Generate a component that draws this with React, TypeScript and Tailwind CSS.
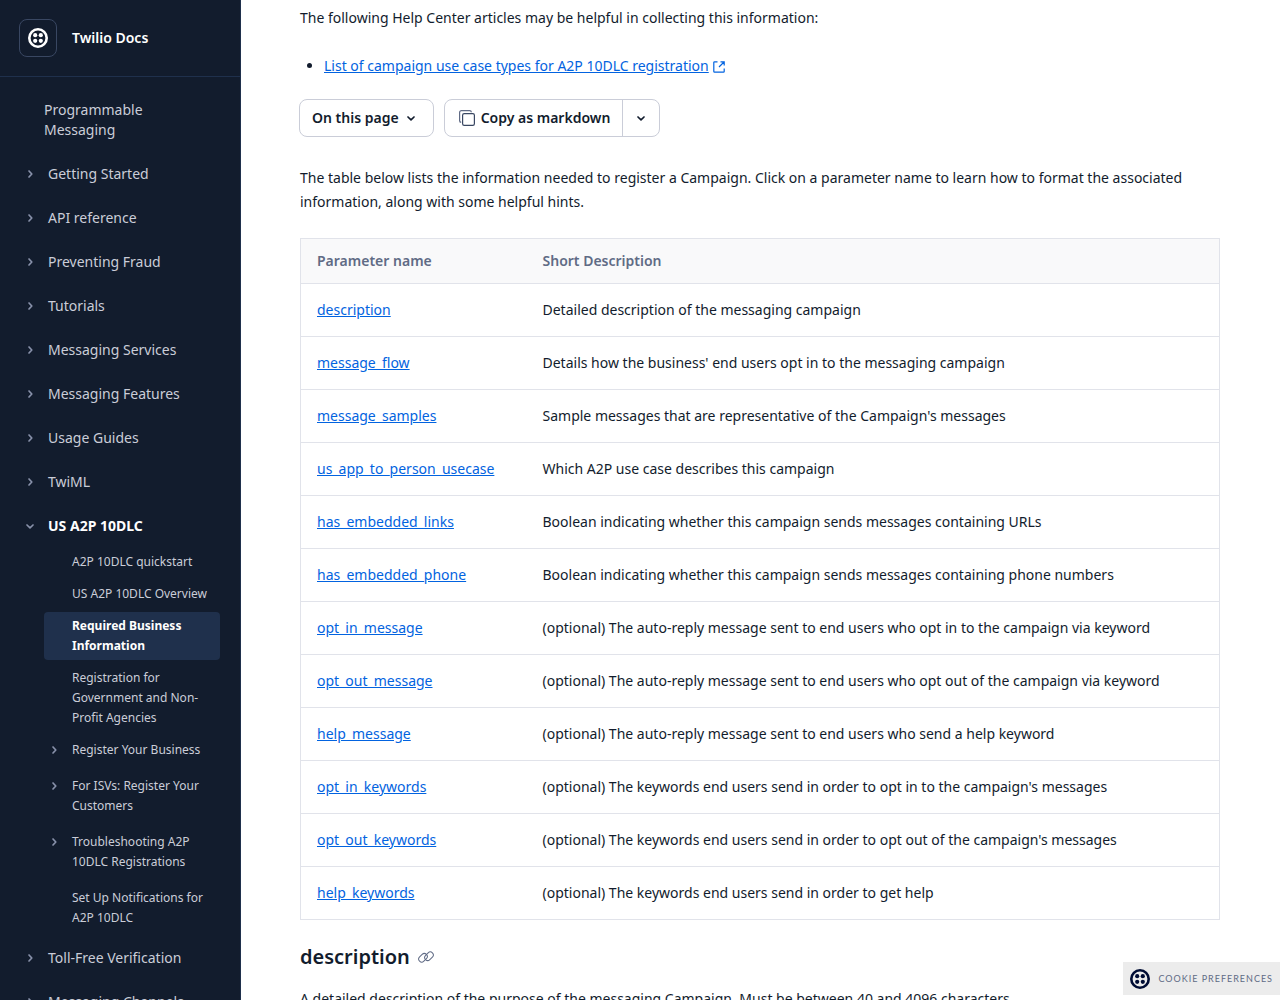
import { ReactNode } from "react"

type NavChild = {
  label: string
  expandable?: boolean
  active?: boolean
}

type NavItem = {
  label: string
  open?: boolean
  children?: NavChild[]
}

const navItems: NavItem[] = [
  { label: "Getting Started" },
  { label: "API reference" },
  { label: "Preventing Fraud" },
  { label: "Tutorials" },
  { label: "Messaging Services" },
  { label: "Messaging Features" },
  { label: "Usage Guides" },
  { label: "TwiML" },
  {
    label: "US A2P 10DLC",
    open: true,
    children: [
      { label: "A2P 10DLC quickstart" },
      { label: "US A2P 10DLC Overview" },
      { label: "Required Business Information", active: true },
      { label: "Registration for Government and Non-Profit Agencies" },
      { label: "Register Your Business", expandable: true },
      { label: "For ISVs: Register Your Customers", expandable: true },
      { label: "Troubleshooting A2P 10DLC Registrations", expandable: true },
      { label: "Set Up Notifications for A2P 10DLC" },
    ],
  },
  { label: "Toll-Free Verification" },
  { label: "Messaging Channels" },
]

const parameters = [
  { name: "description", text: "Detailed description of the messaging campaign" },
  { name: "message_flow", text: "Details how the business' end users opt in to the messaging campaign" },
  { name: "message_samples", text: "Sample messages that are representative of the Campaign's messages" },
  { name: "us_app_to_person_usecase", text: "Which A2P use case describes this campaign" },
  { name: "has_embedded_links", text: "Boolean indicating whether this campaign sends messages containing URLs" },
  { name: "has_embedded_phone", text: "Boolean indicating whether this campaign sends messages containing phone numbers" },
  { name: "opt_in_message", text: "(optional) The auto-reply message sent to end users who opt in to the campaign via keyword" },
  { name: "opt_out_message", text: "(optional) The auto-reply message sent to end users who opt out of the campaign via keyword" },
  { name: "help_message", text: "(optional) The auto-reply message sent to end users who send a help keyword" },
  { name: "opt_in_keywords", text: "(optional) The keywords end users send in order to opt in to the campaign's messages" },
  { name: "opt_out_keywords", text: "(optional) The keywords end users send in order to opt out of the campaign's messages" },
  { name: "help_keywords", text: "(optional) The keywords end users send in order to get help" },
]

function TwilioMark() {
  return (
    <svg viewBox="0 0 20 20" className="size-5 shrink-0" fill="currentColor" aria-hidden="true">
      <circle cx="10" cy="10" r="8.7" fill="none" stroke="currentColor" strokeWidth="2.6" />
      <circle cx="7.2" cy="7.2" r="2.1" />
      <circle cx="12.8" cy="7.2" r="2.1" />
      <circle cx="7.2" cy="12.8" r="2.1" />
      <circle cx="12.8" cy="12.8" r="2.1" />
    </svg>
  )
}

function Chevron({ down = false }: { down?: boolean }) {
  return (
    <svg
      viewBox="0 0 12 12"
      className="size-3 shrink-0"
      fill="none"
      stroke="currentColor"
      strokeWidth="1.7"
      strokeLinecap="round"
      strokeLinejoin="round"
      aria-hidden="true"
    >
      <path d={down ? "M3 5l3 2.8L9 5" : "M5 3l2.8 3L5 9"} />
    </svg>
  )
}

function CopyIcon() {
  return (
    <svg viewBox="0 0 16 16" className="size-4 shrink-0" fill="none" stroke="#606b85" strokeWidth="1.2" aria-hidden="true">
      <rect x="3.6" y="3.6" width="11.8" height="11.8" rx="1.6" stroke="#394762" />
      <path d="M2.2 12.4A1.8 1.8 0 0 1 .6 10.6V2.4A1.8 1.8 0 0 1 2.4.6h8.2a1.8 1.8 0 0 1 1.8 1.6" />
    </svg>
  )
}

function ExternalIcon() {
  return (
    <svg viewBox="0 0 12 12" className="ml-1 inline size-3" fill="none" stroke="currentColor" strokeWidth="1.2" aria-hidden="true">
      <path d="M4.5.8H1.6a.8.8 0 0 0-.8.8v8.8a.8.8 0 0 0 .8.8h8.8a.8.8 0 0 0 .8-.8V7.5M7.5.8h3.7v3.7M11 1 6 6" />
    </svg>
  )
}

function LinkIcon() {
  return (
    <svg viewBox="0 0 16 16" className="size-4" fill="none" stroke="currentColor" aria-hidden="true">
      <rect x=".2" y="5.8" width="9.6" height="6" rx="3" transform="rotate(-45 5 8.8)" />
      <rect x="6.2" y="4.2" width="9.6" height="6" rx="3" transform="rotate(-45 11 7.2)" />
    </svg>
  )
}

function TextLink({ href, children }: { href: string; children: ReactNode }) {
  return (
    <a href={href} className="text-[#0263e0] underline hover:no-underline">
      {children}
    </a>
  )
}

function Sidebar() {
  return (
    <aside className="w-[241px] shrink-0 overflow-hidden border-r border-[#1f304c] bg-[#121c2d] text-[#cacdd8]">
      <div className="flex h-[77px] items-center gap-[15px] border-b border-[#1f304c] px-[19px]">
        <a
          href="#home"
          aria-label="Twilio home"
          className="flex size-[38px] items-center justify-center rounded-lg border border-[#394762] text-white"
        >
          <TwilioMark />
        </a>
        <span className="text-sm font-semibold text-white">Twilio Docs</span>
      </div>
      <nav aria-label="Documentation" className="pt-[11px] text-sm leading-5">
        <a href="#messaging" className="block py-3 pr-16 pl-11">
          Programmable Messaging
        </a>
        <ul>
          {navItems.map((item) => (
            <li key={item.label}>
              <div className="flex items-center gap-3 py-3 pl-6">
                <button type="button" aria-label={`Toggle ${item.label}`} className="text-[#8891aa]">
                  <Chevron down={item.open} />
                </button>
                <a href="#nav" className={item.open ? "font-bold text-white" : ""}>
                  {item.label}
                </a>
              </div>
              {item.children && <SubNav items={item.children} />}
            </li>
          ))}
        </ul>
      </nav>
    </aside>
  )
}

function SubNav({ items }: { items: NavChild[] }) {
  return (
    <ul className="mr-5 ml-11 text-xs leading-5">
      {items.map((child) => (
        <li key={child.label} className={child.expandable ? "mb-2" : "mb-1"}>
          <div className={child.active ? "flex rounded bg-[#1f304c] py-1 font-bold text-white" : "flex py-1"}>
            <div className="flex w-7 shrink-0 pl-1">
              {child.expandable && (
                <button type="button" aria-label={`Toggle ${child.label}`} className="flex h-5 items-center text-[#8891aa]">
                  <Chevron />
                </button>
              )}
            </div>
            <a href="#nav" aria-current={child.active ? "page" : undefined}>
              {child.label}
            </a>
          </div>
        </li>
      ))}
    </ul>
  )
}

function PageActions() {
  return (
    <div className="mt-[21px] -ml-px flex gap-[10px] text-sm font-semibold">
      <button type="button" className="flex h-[38px] items-center gap-[6px] rounded-lg border border-[#cacdd8] pr-4 pl-3">
        On this page
        <Chevron down />
      </button>
      <div className="flex h-[38px] rounded-lg border border-[#cacdd8]">
        <button type="button" className="flex items-center gap-[6px] pr-3 pl-[14px]">
          <CopyIcon />
          Copy as markdown
        </button>
        <button type="button" aria-label="More copy options" className="flex items-center border-l border-[#cacdd8] px-3">
          <Chevron down />
        </button>
      </div>
    </div>
  )
}

function ParameterTable() {
  return (
    <table className="mt-6 w-full border-collapse border border-[#e1e3ea] text-left">
      <thead>
        <tr className="border-b border-[#e1e3ea] bg-[#f9f9fa] text-[#606b85]">
          <th className="w-[226px] px-4 py-[10px] font-semibold">Parameter name</th>
          <th className="px-4 py-[10px] font-semibold">Short Description</th>
        </tr>
      </thead>
      <tbody>
        {parameters.map((param) => (
          <tr key={param.name} className="border-b border-[#e1e3ea]">
            <td className="px-4 py-[14px]">
              <TextLink href={`#${param.name}`}>{param.name}</TextLink>
            </td>
            <td className="px-4 py-[14px]">{param.text}</td>
          </tr>
        ))}
      </tbody>
    </table>
  )
}

export default function App() {
  return (
    <div className="flex h-screen overflow-hidden bg-white font-['Noto_Sans',sans-serif] text-[#121c2d]">
      <Sidebar />
      <main className="min-w-0 flex-1 overflow-hidden pt-[6px] pr-[60px] pl-[59px] text-sm leading-6">
        <p>The following Help Center articles may be helpful in collecting this information:</p>
        <ul className="mt-6 list-disc pl-6">
          <li>
            <TextLink href="#use-case-types">List of campaign use case types for A2P 10DLC registration</TextLink>
            <span className="text-[#0263e0]">
              <ExternalIcon />
            </span>
          </li>
        </ul>
        <PageActions />
        <p className="mt-[29px]">
          The table below lists the information needed to register a Campaign. Click on a parameter name to learn how to
          format the associated information, along with some helpful hints.
        </p>
        <ParameterTable />
        <h2 id="description" className="mt-[23px] flex items-center gap-2 text-xl leading-7 font-semibold">
          description
          <a href="#description" aria-label="Link to description" className="text-[#606b85]">
            <LinkIcon />
          </a>
        </h2>
        <p className="mt-4">
          A detailed description of the purpose of the messaging Campaign. Must be between 40 and 4096 characters.
        </p>
      </main>
      <button
        type="button"
        className="fixed right-0 bottom-[5px] flex h-[33px] items-center gap-2 bg-[#ececec] px-[7px] font-['Lato',sans-serif] text-[9px] tracking-[1px] text-[#606b85]"
      >
        <span className="text-[#000d35]">
          <TwilioMark />
        </span>
        COOKIE PREFERENCES
      </button>
    </div>
  )
}
